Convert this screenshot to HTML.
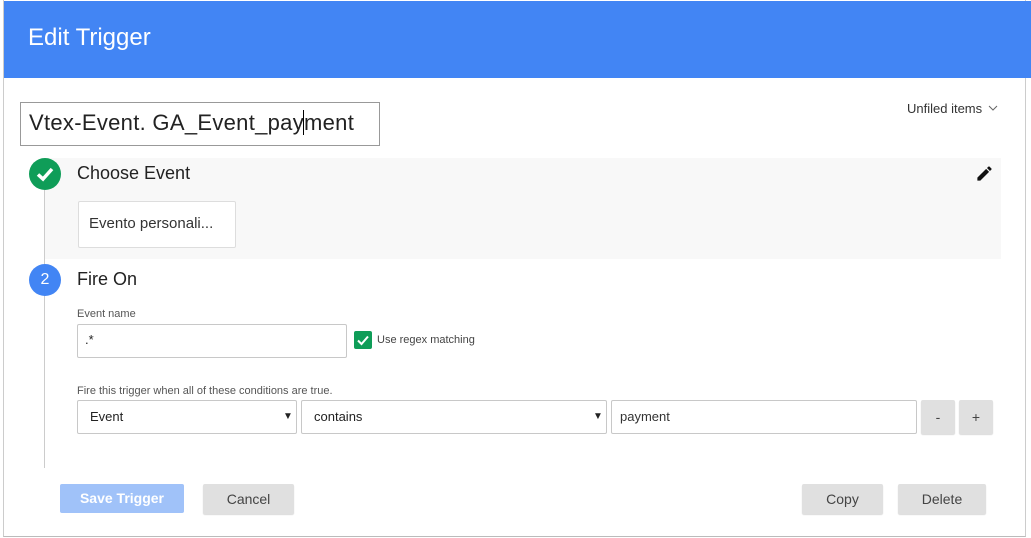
<!DOCTYPE html>
<html><head><style>
*{box-sizing:border-box;margin:0;padding:0}
body{width:1031px;height:538px;background:#fff;font-family:"Liberation Sans",Arial,sans-serif;position:relative;overflow:hidden;color:#222}
.a{position:absolute}
.box{position:absolute;border:1px solid #c8c8c8;background:#fff;border-radius:2px}
.btn{position:absolute;background:#e0e0e0;border-radius:2px;box-shadow:0 1px 1px rgba(0,0,0,.15);font-size:14px;color:#444;text-align:center}
</style></head><body>
<div class="a" style="left:3px;top:0;width:1023px;height:537px;border-left:1px solid #ccc;border-right:1px solid #ccc;border-bottom:1px solid #bbb"></div>
<div class="a" style="left:4px;top:1px;width:1027px;height:77px;background:#4285f4"></div>
<div class="a" style="left:28px;top:24px;font-size:24px;color:#fff;font-weight:300">Edit Trigger</div>
<div class="a" style="left:20px;top:102px;width:360px;height:44px;border:1px solid #999"></div>
<div class="a" style="left:29px;top:110px;font-size:22px;color:#222;letter-spacing:0.3px">Vtex-Event. GA_Event_pay<span style="border-left:1px solid #000;margin-left:-1px"></span>ment</div>
<div class="a" style="left:907px;top:101px;font-size:13px;color:#333">Unfiled items</div>
<svg class="a" style="left:988px;top:104px" width="10" height="8"><path d="M1 2l4 4 4-4" stroke="#666" stroke-width="1" fill="none"/></svg>
<div class="a" style="left:44px;top:158px;width:957px;height:101px;background:#f8f8f8"></div>
<div class="a" style="left:44px;top:190px;width:1px;height:278px;background:#ccc"></div>
<div class="a" style="left:29px;top:158px;width:32px;height:32px;border-radius:50%;background:#0f9d58"></div>
<svg class="a" style="left:29px;top:158px" width="32" height="32"><path d="M9 16.5l5 4.5 9-10" stroke="#fff" stroke-width="3.5" fill="none"/></svg>
<div class="a" style="left:77px;top:163px;font-size:18px;color:#222">Choose Event</div>
<svg class="a" style="left:975px;top:164px" width="19" height="19" viewBox="0 0 24 24"><path d="M3 17.25V21h3.75L17.81 9.94l-3.75-3.75L3 17.25zM20.71 7.04a1 1 0 000-1.41l-2.34-2.34a1 1 0 00-1.41 0l-1.83 1.83 3.75 3.75 1.83-1.83z" fill="#111"/></svg>
<div class="a" style="left:78px;top:201px;width:158px;height:47px;background:#fff;border:1px solid #ddd;border-radius:2px"></div>
<div class="a" style="left:89px;top:215px;font-size:15px;color:#333">Evento personali...</div>
<div class="a" style="left:29px;top:264px;width:32px;height:32px;border-radius:50%;background:#4285f4;color:#fff;font-size:16px;text-align:center;line-height:32px">2</div>
<div class="a" style="left:77px;top:269px;font-size:18px;color:#222">Fire On</div>
<div class="a" style="left:77px;top:308px;font-size:11px;color:#555">Event name</div>
<div class="box" style="left:77px;top:324px;width:270px;height:34px"></div>
<div class="a" style="left:85px;top:332px;font-size:13px">.*</div>
<div class="a" style="left:354px;top:331px;width:18px;height:18px;background:#0f9d58;border-radius:2px"></div>
<svg class="a" style="left:354px;top:331px" width="18" height="18"><path d="M4 9.5l3.5 3.5 6.5-7.5" stroke="#fff" stroke-width="2" fill="none"/></svg>
<div class="a" style="left:377px;top:334px;font-size:11px;color:#444">Use regex matching</div>
<div class="a" style="left:77px;top:385px;font-size:11px;color:#555">Fire this trigger when all of these conditions are true.</div>
<div class="box" style="left:77px;top:400px;width:220px;height:34px"></div>
<div class="a" style="left:90px;top:409px;font-size:13px">Event</div>
<div class="a" style="left:283px;top:411px;font-size:10px">&#9660;</div>
<div class="box" style="left:301px;top:400px;width:306px;height:34px"></div>
<div class="a" style="left:314px;top:409px;font-size:13px">contains</div>
<div class="a" style="left:593px;top:411px;font-size:10px">&#9660;</div>
<div class="box" style="left:611px;top:400px;width:306px;height:34px"></div>
<div class="a" style="left:620px;top:409px;font-size:13px;color:#333">payment</div>
<div class="btn" style="left:921px;top:400px;width:34px;height:34px;line-height:34px">-</div>
<div class="btn" style="left:959px;top:400px;width:34px;height:34px;line-height:34px">+</div>
<div class="a" style="left:60px;top:484px;width:124px;height:29px;background:#a0c2f9;border-radius:2px;color:#fff;font-size:14px;font-weight:bold;text-align:center;line-height:29px">Save Trigger</div>
<div class="btn" style="left:203px;top:484px;width:91px;height:30px;line-height:30px">Cancel</div>
<div class="btn" style="left:802px;top:484px;width:81px;height:30px;line-height:30px">Copy</div>
<div class="btn" style="left:898px;top:484px;width:88px;height:30px;line-height:30px">Delete</div>
</body></html>
